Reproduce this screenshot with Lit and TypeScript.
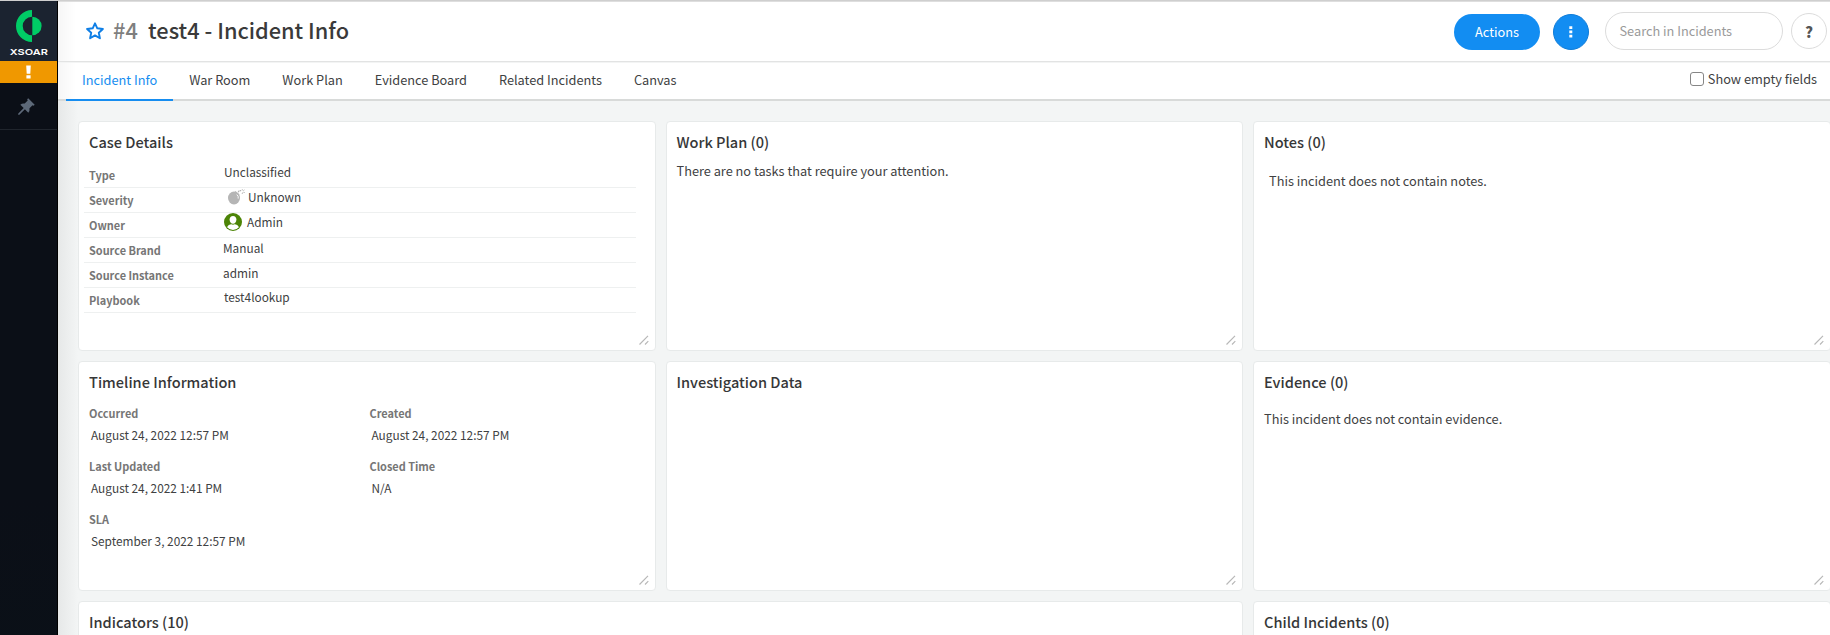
import { LitElement, html, css, svg, nothing } from "lit";
import { customElement, property } from "lit/decorators.js";
import { classMap } from "lit/directives/class-map.js";

@customElement("info-card")
class InfoCard extends LitElement {
  @property() heading = "";
  @property({ type: Boolean }) resizable = false;

  static styles = css`
    :host {
      display: flex;
      flex-direction: column;
      position: relative;
      box-sizing: border-box;
      background: #fff;
      border: 1px solid #e7eaea;
      border-radius: 4px;
      overflow: hidden;
    }
    .heading {
      margin: 0;
      padding: 9px 10px 0;
      font-size: 14.57px;
      line-height: 22px;
      font-weight: 500;
      color: #363738;
    }
    .grip {
      position: absolute;
      right: 6px;
      bottom: 5px;
    }
  `;

  render() {
    return html`
      <h2 class="heading">${this.heading}</h2>
      <slot></slot>
      ${this.resizable
        ? html`<svg class="grip" width="10" height="10" viewBox="0 0 10 10" fill="none" stroke="#b8b8b8" stroke-width="1.2">
            <path d="M.5 9.5 9 .8M6 9.5 9.3 6.2" />
          </svg>`
        : nothing}
    `;
  }
}

const severityIcon = svg`<svg class="bomb" width="17" height="16" viewBox="0 0 17 16">
  <ellipse cx="6" cy="9" rx="6" ry="6.4" fill="#b5b5b5" />
  <path d="M7.4 2 11.6 5.4 10.4 7.4 6 4.2z" fill="#b5b5b5" />
  <path d="M8.8 5.6q2 1.6 1.4 4" stroke="#fff" stroke-width=".9" fill="none" />
  <path d="M10.2 3.2q.8-2.2 3-1.5" stroke="#b0b0b0" stroke-width="1.2" fill="none" stroke-dasharray="1.8 .6" />
  <path d="M14.2.2l.5 1.2M16.6.6l-1.2 1.2M16.8 3.6l-1.5-.4M14.2 5l.3-1.5" stroke="#bdbdbd" stroke-width="1" />
</svg>`;

const ownerIcon = svg`<svg class="avatar" width="18" height="18" viewBox="0 0 18 18">
  <circle cx="9" cy="9" r="9" fill="#4c8406" />
  <path d="M9 2.9c2.1 0 3.4 1.5 3.4 3.6 0 2.3-1.4 4.3-3.4 4.3S5.6 8.8 5.6 6.5c0-2.1 1.3-3.6 3.4-3.6z" fill="#fff" />
  <path d="M3.1 14.2c.7-2 2.6-2.6 4.3-2.9q1.6.9 3.2 0c1.7.3 3.6.9 4.3 2.9A7.9 7.9 0 0 1 9 16.9a7.9 7.9 0 0 1-5.9-2.7z" fill="#fff" />
</svg>`;

const details = [
  { label: "Type", value: "Unclassified", cls: "" },
  { label: "Severity", value: "Unknown", icon: severityIcon, cls: "severity" },
  { label: "Owner", value: "Admin", icon: ownerIcon, cls: "owner" },
  { label: "Source Brand", value: "Manual", cls: "source" },
  { label: "Source Instance", value: "admin", cls: "source" },
  { label: "Playbook", value: "test4lookup", cls: "" },
];

const timeline = [
  ["Occurred", "August 24, 2022 12:57 PM"],
  ["Created", "August 24, 2022 12:57 PM"],
  ["Last Updated", "August 24, 2022 1:41 PM"],
  ["Closed Time", "N/A"],
  ["SLA", "September 3, 2022 12:57 PM"],
];

const tabs = ["Incident Info", "War Room", "Work Plan", "Evidence Board", "Related Incidents", "Canvas"];

@customElement("app-root")
class AppRoot extends LitElement {
  static styles = css`
    :host {
      display: grid;
      grid-template-columns: 58px minmax(0, 1fr);
      box-sizing: border-box;
      width: 100%;
      height: 100vh;
      overflow: hidden;
      border-top: 1px solid #cfcfcf;
      font-family: "Noto Sans CJK SC", "Noto Sans", sans-serif;
      font-size: 12.75px;
      line-height: 20px;
      color: #404142;
      white-space: nowrap;
    }
    svg {
      display: block;
      flex: none;
    }
    .sidebar {
      display: flex;
      flex-direction: column;
      background: linear-gradient(#0b0f17 60%, #0a1118 90%, #090e12);
      border-right: 1px solid #000;
    }
    .logo {
      height: 60px;
      background: #1b2330;
    }
    .alert {
      display: grid;
      place-items: center;
      height: 22px;
      background: #f09800;
    }
    .pin {
      display: grid;
      place-items: center;
      height: 46px;
      padding-right: 4px;
      border-bottom: 1px solid #20252d;
    }
    .bottom {
      margin-top: auto;
      height: 28px;
      padding: 16px 0 0 18px;
      box-sizing: border-box;
      background: #1b2230;
      overflow: hidden;
    }
    .page {
      display: flex;
      flex-direction: column;
      min-width: 0;
    }
    .header {
      display: flex;
      align-items: center;
      height: 61px;
      box-sizing: border-box;
      padding: 0 3px 2px 28px;
      border-top: 1px solid #dedede;
      border-bottom: 1px solid #e2e3e3;
      background: linear-gradient(90deg, #f6f6f6, #fff 18px);
    }
    .title {
      display: flex;
      margin: 0 auto 2px 9px;
      font-size: 21.76px;
      line-height: 32px;
      font-weight: 500;
      color: #3a3a3a;
    }
    .number {
      color: #7f7f7f;
      margin-right: 10.3px;
    }
    .actions {
      width: 86px;
      height: 36px;
      margin: 2px 13px 0 0;
      border-radius: 18px;
      background: #128df2;
      color: #fff;
      text-align: center;
      line-height: 36px;
    }
    .menu {
      display: grid;
      place-items: center;
      box-sizing: border-box;
      width: 36px;
      height: 36px;
      margin: 2px 16px 0 0;
      border: 1px solid #0f7cd8;
      border-radius: 50%;
      background: #128df2;
    }
    .search {
      box-sizing: border-box;
      width: 178px;
      height: 38px;
      margin-right: 8px;
      padding-left: 13.5px;
      border: 1px solid #dcdcdc;
      border-radius: 19px;
      line-height: 35px;
      color: #9a9a9a;
    }
    .help {
      box-sizing: border-box;
      width: 36px;
      height: 36px;
      border: 1px solid #dcdcdc;
      border-radius: 50%;
      text-align: center;
      font: 900 15px/35px "Noto Sans CJK SC", sans-serif;
      color: #555;
    }
    .tabs {
      display: flex;
      height: 39px;
      box-sizing: border-box;
      padding: 0 13px 0 8px;
      border-bottom: 2px solid #d8dad9;
      box-shadow: inset 0 1px #f3f4f4;
      background: linear-gradient(90deg, #f6f6f6, #fff 18px);
    }
    .tab {
      height: 37px;
      padding: 0 16px;
      line-height: 35px;
    }
    .tab.active {
      color: #168df0;
      border-bottom: 2px solid #168df0;
    }
    .toggle {
      display: flex;
      gap: 4px;
      margin-left: auto;
      line-height: 34px;
    }
    .box {
      box-sizing: border-box;
      width: 14px;
      height: 14px;
      margin-top: 10px;
      border: 1px solid #868686;
      border-radius: 3px;
    }
    .board {
      flex: 1;
      min-height: 0;
      display: grid;
      grid-template-columns: repeat(3, 577.5px);
      grid-auto-rows: 230px;
      gap: 10px;
      padding: 20px 0 0 20px;
      background: linear-gradient(90deg, #e6e8e8, #f3f5f5 20px);
      overflow: hidden;
    }
    .wide {
      grid-column: span 2;
    }
    .rows {
      margin: 10px 19px 0 5px;
    }
    .row {
      display: grid;
      grid-template-columns: 135px 1fr;
      height: 25px;
      box-sizing: border-box;
      padding-left: 5px;
      border-bottom: 1px solid #eef0f0;
    }
    .label {
      font-size: 10.93px;
      line-height: 24px;
      font-weight: 700;
      color: #767676;
    }
    .value {
      display: flex;
      margin-top: -1px;
      font-size: 11.84px;
      line-height: 20px;
    }
    .severity {
      gap: 3px;
      padding-left: 4px;
    }
    .bomb {
      margin-top: 2px;
    }
    .owner {
      gap: 5px;
    }
    .avatar {
      margin-top: 1px;
    }
    .source {
      line-height: 22px;
      margin-left: -1px;
    }
    .times {
      display: grid;
      grid-template-columns: 280.5px 1fr;
      grid-auto-rows: 53px;
      padding: 10px 0 0 10px;
    }
    .time {
      display: flex;
      flex-direction: column;
      gap: 1px;
    }
    .time .label {
      line-height: 21px;
    }
    .date {
      padding-left: 2px;
      font-size: 11.84px;
      line-height: 20px;
    }
    .note {
      margin: 0;
      padding: 8px 10px;
    }
    .note.low {
      padding: 18px 15px;
    }
    .note.mid {
      padding: 16px 10px;
    }
  `;

  render() {
    return html`
      <nav class="sidebar">
        <div class="logo">
          <svg width="57" height="60" viewBox="0 1 57 60">
            <path d="M32 10a16 16 0 0 0 0 32v-6.7a9.3 9.3 0 0 1 0-18.6z" fill="#00cc66" />
            <path d="M32.3 16.7a9.3 9.3 0 0 1 0 18.6z" fill="#00cc66" />
            <text x="9.8" y="55" textLength="38" lengthAdjust="spacingAndGlyphs" font-family="Inter, sans-serif" font-size="8.2" font-weight="600" fill="#fff">XSOAR</text>
          </svg>
        </div>
        <div class="alert">
          <svg width="5" height="14" viewBox="0 0 5 14" fill="#fff">
            <path d="M.2.6h4.6L4.3 8.8H.7zM.4 10.2h4.2v3.4H.4z" />
          </svg>
        </div>
        <div class="pin">
          <svg width="17" height="17" viewBox="0 0 17 17" fill="#5d6979">
            <path d="M10.2.3 16.7 6.8 15.6 7.8 14.5 7.3 11.5 10.3Q12 12.7 10.3 14.7L6.9 11.3 1.4 16.7.1 16.7.3 15.5 5.7 10.1 2.3 6.7Q4.3 5 6.7 5.5L9.7 2.5 9.2 1.3z" />
          </svg>
        </div>
        <div class="bottom">
          <svg width="17" height="17" viewBox="0 0 17 17" fill="none" stroke="#5f6b7b">
            <path d="M6.5 1.3a7.3 7.3 0 1 1-2.6 1.2" stroke-width="1.8" />
            <path d="M5.3 4.3 9.3 8.6" stroke-width="2" />
          </svg>
        </div>
      </nav>
      <main class="page">
        <header class="header">
          <svg width="18" height="18" viewBox="0 0 18 18" fill="none" stroke="#0f7fe6" stroke-width="1.9" stroke-linejoin="round">
            <path d="M9 1.3 11.3 6.3 16.9 7 12.8 10.7 13.9 16.3 9 13.4 4.1 16.3 5.2 10.7 1.1 7 6.7 6.3z" />
          </svg>
          <h1 class="title"><span class="number">#4</span><span>test4 - Incident Info</span></h1>
          <div class="actions">Actions</div>
          <div class="menu">
            <svg width="4" height="12" viewBox="0 0 4 12" fill="#fff">
              <path d="M.3.3h3v2.7h-3zM.3 4.5h3v2.7h-3zM.3 8.7h3v2.7h-3z" />
            </svg>
          </div>
          <div class="search">Search in Incidents</div>
          <div class="help">?</div>
        </header>
        <div class="tabs">
          ${tabs.map((t, i) => html`<div class=${classMap({ tab: true, active: i === 0 })}>${t}</div>`)}
          <div class="toggle"><span class="box"></span><span>Show empty fields</span></div>
        </div>
        <section class="board">
          <info-card heading="Case Details" resizable>
            <div class="rows">
              ${details.map(
                (d) => html`<div class="row">
                  <span class="label">${d.label}</span>
                  <span class="value ${d.cls}">${d.icon ?? nothing}<span>${d.value}</span></span>
                </div>`
              )}
            </div>
          </info-card>
          <info-card heading="Work Plan (0)" resizable>
            <p class="note">There are no tasks that require your attention.</p>
          </info-card>
          <info-card heading="Notes (0)" resizable>
            <p class="note low">This incident does not contain notes.</p>
          </info-card>
          <info-card heading="Timeline Information" resizable>
            <div class="times">
              ${timeline.map(([l, v]) => html`<div class="time"><span class="label">${l}</span><span class="date">${v}</span></div>`)}
            </div>
          </info-card>
          <info-card heading="Investigation Data" resizable></info-card>
          <info-card heading="Evidence (0)" resizable>
            <p class="note mid">This incident does not contain evidence.</p>
          </info-card>
          <info-card class="wide" heading="Indicators (10)"></info-card>
          <info-card heading="Child Incidents (0)"></info-card>
        </section>
      </main>
    `;
  }
}
